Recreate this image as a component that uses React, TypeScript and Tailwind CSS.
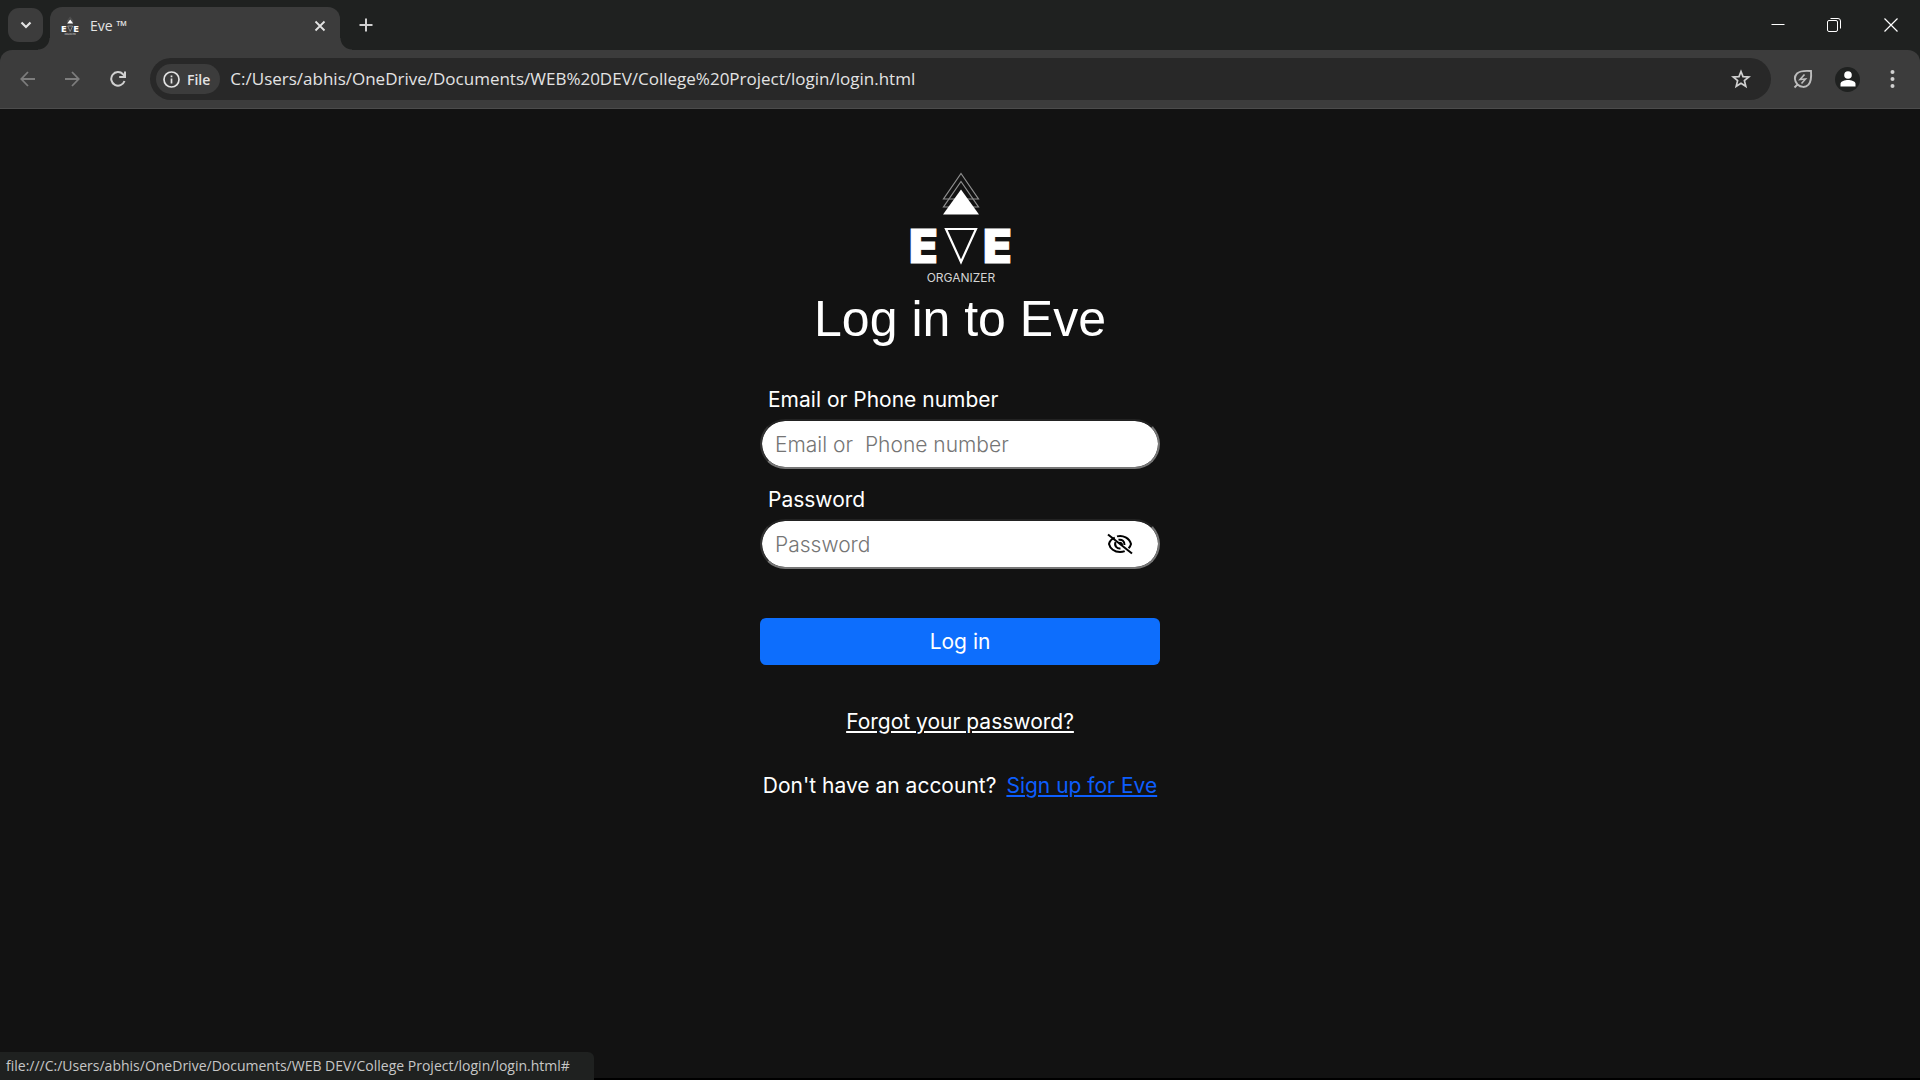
import { useState } from "react";

const chromeFont = "font-['Open_Sans','Noto_Sans',sans-serif]";
const pageFont = "font-['Inter','Liberation_Sans',sans-serif]";

function EveLogo({ className, label }: { className: string; label: string }) {
  return (
    <svg viewBox="-2 0 112 120" className={className} role="img" aria-label={label}>
      <g fill="none" stroke="#8f8f8f" strokeWidth="1.2">
        <path d="M55 4.500 L72.500 30 H37.500 Z" />
        <path d="M55 12.500 L72.500 38 H37.500 Z" />
      </g>
      <path d="M55 20.500 L73 45.500 H37 Z" fill="#fff" />
      <g fill="#fff" stroke="#fff" strokeWidth="1" fontFamily="Inter, sans-serif">
        <text x="3" y="94" fontSize="47" fontWeight="900">E</text>
        <text x="77" y="94" fontSize="47" fontWeight="900">E</text>
      </g>
      <text x="55" y="113" fontSize="12" fontFamily="Inter, sans-serif" textAnchor="middle" fill="#d4d4d4">ORGANIZER</text>
      <path d="M40 60 H70 L55 93 Z" fill="none" stroke="#fff" strokeWidth="2.2" />
    </svg>
  );
}

function TabStrip() {
  return (
    <header className="flex h-[50px] items-end bg-[#1f2120]">
      <button aria-label="Search tabs" className="mb-2 ml-2 flex h-[34px] w-[35px] items-center justify-center rounded-[11px] bg-[#3c3c3c]">
        <svg width="12" height="8" viewBox="0 0 12 8" fill="none" stroke="#e3e3e3" strokeWidth="2.2">
          <path d="M1.500 1.500 L6 6 L10.500 1.500" />
        </svg>
      </button>
      <div className="relative ml-[7px] flex h-[43px] w-[290px] items-center rounded-t-xl bg-[#3c3c3c] pl-[10px] pr-[14px] pb-2 pt-[2px]">
        <span className="absolute bottom-0 -left-3 size-3 bg-[radial-gradient(circle_at_0_0,transparent_11px,#3c3c3c_12px)]" />
        <span className="absolute bottom-0 -right-3 size-3 bg-[radial-gradient(circle_at_100%_0,transparent_11px,#3c3c3c_12px)]" />
        <EveLogo className="h-5 w-5" label="Eve" />
        <span className="ml-[10px] flex-1 text-[14px] leading-5 text-[#e3e3e3]">Eve ™</span>
        <button aria-label="Close tab" className="flex size-3 items-center justify-center">
          <svg width="12" height="12" viewBox="0 0 12 12" stroke="#e3e3e3" strokeWidth="1.8">
            <path d="M1.500 1.500 L10.500 10.500 M10.500 1.500 L1.500 10.500" />
          </svg>
        </button>
      </div>
      <button aria-label="New tab" className="mb-[18px] ml-[19px]">
        <svg width="14" height="14" viewBox="0 0 14 14" stroke="#d0d0d0" strokeWidth="2">
          <path d="M7 0.500 V13.500 M0.500 7 H13.500" />
        </svg>
      </button>
      <div className="ml-auto flex h-full items-center text-white">
        <button aria-label="Minimize" className="flex h-full w-14 items-center justify-center">
          <svg width="14" height="14" viewBox="0 0 14 14" stroke="currentColor"><path d="M0.500 6.500 H13.500" /></svg>
        </button>
        <button aria-label="Restore" className="flex h-full w-14 items-center justify-center">
          <svg width="14" height="14" viewBox="0 0 14 14" fill="none" stroke="currentColor">
            <rect x="0.500" y="2.500" width="10" height="11" rx="1.500" />
            <path d="M3.500 0.500 H11 Q13.500 0.500 13.500 3 V10.500" />
          </svg>
        </button>
        <button aria-label="Close window" className="flex h-full w-[58px] items-center justify-center">
          <svg width="14" height="14" viewBox="0 0 14 14" stroke="currentColor" strokeWidth="1.200"><path d="M0.500 0.500 L13.500 13.500 M13.500 0.500 L0.500 13.500" /></svg>
        </button>
      </div>
    </header>
  );
}

function Toolbar() {
  return (
    <div className="bg-[#1f2120]">
      <nav aria-label="Browser" className="flex h-[59px] items-center rounded-t-xl border-b border-[#4c4c4c] bg-[#3c3c3c] pl-5 pr-[25px]">
        <button aria-label="Back" className="text-[#7d7d7d]">
          <svg width="16" height="16" viewBox="0 0 16 16" fill="none" stroke="currentColor" strokeWidth="1.800">
            <path d="M15 8 H1.500 M8 1 L1.300 8 L8 15" />
          </svg>
        </button>
        <button aria-label="Forward" className="ml-7 text-[#7d7d7d]">
          <svg width="16" height="16" viewBox="0 0 16 16" fill="none" stroke="currentColor" strokeWidth="1.800">
            <path d="M1 8 H14.500 M8 1 L14.700 8 L8 15" />
          </svg>
        </button>
        <button aria-label="Reload" className="ml-[30px] text-[#d0d0d0]">
          <svg width="16" height="16" viewBox="0 0 16 16" fill="none" stroke="currentColor" strokeWidth="2">
            <path d="M14.500 10 A6.800 6.800 0 1 1 13 3.200 L14.800 5 M15 0.500 V6 H9.200" />
          </svg>
        </button>
        <div className="ml-6 flex h-[42px] min-w-0 flex-1 items-center rounded-full bg-[#282828] pl-[6px] pr-5">
          <button className="flex h-[30px] shrink-0 items-center rounded-full bg-[#3c3c3c] pl-[7px] pr-[10px] text-[14px] font-semibold text-[#e3e3e3]">
            <svg width="17" height="17" viewBox="0 0 17 17" fill="none" stroke="currentColor" strokeWidth="1.700" className="mr-[7px]">
              <circle cx="8.500" cy="8.500" r="7.500" />
              <path d="M8.500 7.500 V12.500 M8.500 4.500 V6.200" />
            </svg>
            File
          </button>
          <input
            aria-label="Address"
            defaultValue="C:/Users/abhis/OneDrive/Documents/WEB%20DEV/College%20Project/login/login.html"
            className="ml-[10px] min-w-0 flex-1 bg-transparent text-[17px] leading-6 text-[#e3e3e3] outline-none"
          />
          <button aria-label="Bookmark this tab" className="text-[#d0d0d0]">
            <svg width="20" height="20" viewBox="0 0 20 20" fill="none" stroke="currentColor" strokeWidth="1.700">
              <path d="M10 2.500 L12 7.600 L17.800 8 L13.400 11.600 L14.800 17.300 L10 14.200 L5.200 17.300 L6.600 11.600 L2.200 8 L8 7.600 Z" />
            </svg>
          </button>
        </div>
        <button aria-label="Energy saver" className="ml-[22px] text-[#bdbdbd]">
          <svg width="20" height="20" viewBox="0 0 20 20" fill="none" stroke="currentColor" strokeWidth="1.900">
            <path d="M1.500 18.500 L4.500 15.500 C1.200 12 1 7.500 4 4.500 C7 1.700 12 1.500 18 2 C18.500 8 18.200 12.500 15.500 15.700 C12.500 18.800 7.800 18.600 4.500 15.500" />
            <path d="M11.500 5.500 L7 10.500 L12.500 10 L8.500 14.500" strokeWidth="1.600" />
          </svg>
        </button>
        <button aria-label="Profile" className="ml-[22px] flex size-[25px] items-center justify-center rounded-full bg-[#1f2120]">
          <svg width="16" height="16" viewBox="0 0 16 16" fill="#fff">
            <circle cx="8" cy="4" r="3.800" />
            <path d="M0.500 15.500 V12.800 C0.500 10.200 5 9 8 9 C11 9 15.500 10.200 15.500 12.800 V15.500 Z" />
          </svg>
        </button>
        <button aria-label="Menu" className="ml-[30px] text-[#d0d0d0]">
          <svg width="5" height="18" viewBox="0 0 5 18" fill="currentColor">
            <circle cx="2.500" cy="2" r="2" /><circle cx="2.500" cy="9" r="2" /><circle cx="2.500" cy="16" r="2" />
          </svg>
        </button>
      </nav>
    </div>
  );
}

const fieldBox =
  "h-[50px] w-full rounded-full border-2 border-t-[#222] border-l-[#333] border-r-[#767676] border-b-[#767676] bg-white bg-clip-padding px-[13px] text-[21px] font-light text-black outline-none placeholder:text-[#757575]";

function LoginForm() {
  const [visible, setVisible] = useState(false);
  return (
    <form className="mx-auto flex w-[400px] flex-col text-[21px] leading-[30px] text-white" onSubmit={(e) => e.preventDefault()}>
      <label htmlFor="identity" className="mb-1 pl-2">Email or Phone number</label>
      <input id="identity" type="text" placeholder="Email or  Phone number" className={fieldBox} />
      <label htmlFor="password" className="mb-1 mt-4 pl-2">Password</label>
      <div className="relative">
        <input id="password" type={visible ? "text" : "password"} placeholder="Password" className={fieldBox} />
        <button type="button" aria-label="Show password" onClick={() => setVisible(!visible)} className="absolute right-[27px] top-[14px] text-black">
          <svg width="26" height="22" viewBox="0 0 26 22" fill="none" stroke="currentColor" strokeWidth="2">
            <path d="M7.800 4.600 C4.500 6 2.500 8.500 2 11 C3 15.500 7.500 19 13 19 C14.700 19 16.300 18.700 17.700 18.100" />
            <path d="M10 3.400 C16 1.800 22.500 5 24 11 C23.600 12.700 22.800 14 21.600 15.200" />
            <path d="M8.500 9 C7 13 10 15.800 13.500 15.400 M11.500 6.800 C15 6 17.800 8.500 17.500 12" />
            <path d="M12 10 A2 2 0 0 1 15 12" />
            <path d="M1 1.500 L25 20.500" />
          </svg>
        </button>
      </div>
      <button type="submit" className="mt-[49px] h-[47px] rounded-md bg-[#0d6efd] text-white">Log in</button>
      <a href="#" className="mt-[42px] self-center underline">Forgot your password?</a>
      <p className="mt-[34px] whitespace-nowrap text-center">
        Don't have an account?<a href="#" className="ml-[10px] text-[#0d5efd] underline">Sign up for Eve</a>
      </p>
    </form>
  );
}

export default function App() {
  return (
    <div className="flex min-h-screen flex-col bg-[#121212]">
      <div className={chromeFont}>
        <TabStrip />
        <Toolbar />
      </div>
      <main className={`${pageFont} flex-1 border-b-2 border-black pt-[60px]`}>
        <div className="flex flex-col items-center">
          <EveLogo className="h-[120px] w-[112px]" label="Eve Organizer" />
          <h1 className="mb-9 font-['Liberation_Sans',Arial,sans-serif] text-[50px] leading-[60px] text-white">Log in to Eve</h1>
        </div>
        <LoginForm />
      </main>
      <div className={`${chromeFont} fixed bottom-0 left-0 flex h-7 items-center rounded-tr-md bg-[#1f2120] pb-[2px] pl-[6px] pr-6 text-[14px] text-[#c7c7c7]`}>
        file:///C:/Users/abhis/OneDrive/Documents/WEB DEV/College Project/login/login.html#
      </div>
    </div>
  );
}
